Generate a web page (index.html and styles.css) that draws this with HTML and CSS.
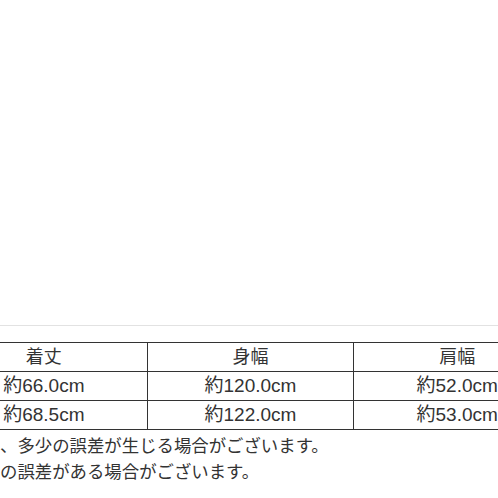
FILE: index.html
```html
<!DOCTYPE html>
<html lang="ja">
<head>
<meta charset="utf-8">
<link rel="stylesheet" href="styles.css">
</head>
<body>
<div class="page">
  <div class="blank"></div>
  <div class="rule"></div>
  <div class="shift">
    <table class="size">
      <tr><th>着丈</th><th>身幅</th><th>肩幅</th></tr>
      <tr><td>約66.0cm</td><td>約120.0cm</td><td>約52.0cm</td></tr>
      <tr><td>約68.5cm</td><td>約122.0cm</td><td>約53.0cm</td></tr>
    </table>
  </div>
  <div class="notes">
    <p class="note">、多少の誤差が生じる場合がございます。</p>
    <p class="note">の誤差がある場合がございます。</p>
  </div>
</div>
</body>
</html>
```

FILE: styles.css
```css
html, body {
  margin: 0;
  padding: 0;
  background: #fff;
  overflow: hidden;
}
.page {
  width: 498px;
  height: 498px;
  overflow: hidden;
  font-family: "Liberation Sans", "Noto Sans CJK JP", sans-serif;
  color: #333;
}
.blank {
  height: 325px;
}
.rule {
  height: 1px;
  background: #e2e2e2;
}
.shift {
  margin-top: 16px;
  margin-left: -60px;
  width: 700px;
}
.size {
  border-collapse: collapse;
  table-layout: fixed;
  width: 621px;
}
.size th, .size td {
  border: 1px solid #333;
  height: 28px;
  padding: 0;
  text-align: center;
  font-size: 18px;
  font-weight: normal;
  line-height: 28px;
}
.size td {
  font-size: 19px;
}
.notes {
  padding-top: 2px;
}
.note {
  margin: 0;
  font-family: "Noto Sans CJK JP", sans-serif;
  font-size: 17.4px;
  line-height: 26px;
  white-space: nowrap;
}
```
